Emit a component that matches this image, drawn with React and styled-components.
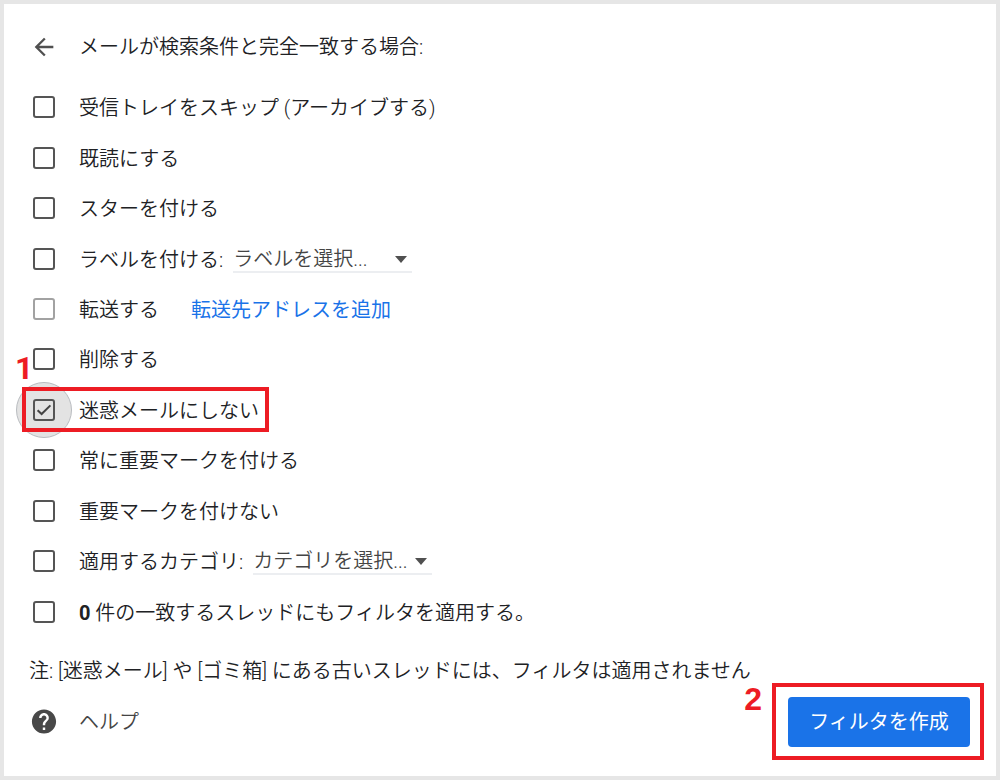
import React, { useState } from "react";
import styled, { createGlobalStyle } from "styled-components";

const GlobalStyle = createGlobalStyle`
  *{
    box-sizing: border-box;
  }

  body{
    margin: 0;
    background-color: #fff;
    color: #202124;
    font-family: Roboto, "Noto Sans CJK JP", sans-serif;
    font-size: 20px;
    font-weight: 350;
    line-height: 24px;
  }
`;

const Panel = styled.main`
  display: flex;
  flex-direction: column;
  min-height: 100vh;
  border: 4px solid #e6e6e6;
  padding: 23px 12px 16px 25px;
`;

const Header = styled.header`
  display: flex;
  align-items: center;
  gap: 20px;
  height: 40px;
  margin-bottom: 15px;
`;

const Title = styled.h1`
  margin: 0;
  font-size: 20px;
  font-weight: 350;
`;

const BackButton = styled.button`
  display: flex;
  align-items: center;
  justify-content: center;
  width: 30px;
  height: 30px;
  padding: 0;
  border: none;
  background-color: transparent;
  color: #505050;
  cursor: pointer;
`;

const Options = styled.form`
  flex: 1;
  display: grid;
  grid-auto-rows: 1fr;
`;

const Row = styled.div`
  position: relative;
  display: flex;
  align-items: center;
  min-height: 40px;
`;

const CheckCell = styled.span`
  position: relative;
  display: grid;
  place-items: center;
  width: 30px;
  height: 30px;
  margin-right: 20px;

  svg{
    position: absolute;
    pointer-events: none;
  }
`;

const Ripple = styled.span`
  position: absolute;
  width: 56px;
  height: 56px;
  border: 1px solid #b9bcc0;
  border-radius: 50%;
  background-color: #e3e3e3;
`;

const Checkbox = styled.input`
  appearance: none;
  position: relative;
  width: 22px;
  height: 22px;
  margin: 0;
  border: 2px solid ${({ disabled }) => (disabled ? "#a2a2a2" : "#555")};
  border-radius: 3px;
  cursor: pointer;
`;

const Label = styled.label`
  padding-top: 2px;
  cursor: pointer;

  strong{
    font-weight: 700;
  }
`;

const SelectWrap = styled.span`
  position: relative;
  display: flex;
  width: 179px;
  margin-left: 10px;

  svg{
    position: absolute;
    right: 5px;
    top: 11px;
    pointer-events: none;
  }
`;

const Select = styled.select`
  appearance: none;
  width: 100%;
  height: 28px;
  padding: 2px 0 0;
  border: none;
  border-bottom: 2px solid #eceef1;
  border-radius: 0;
  background-color: transparent;
  color: #444;
  font: inherit;
  cursor: pointer;
`;

const AddLink = styled.a`
  margin-left: 32px;
  padding-top: 2px;
  color: #1a73e8;
  font-weight: 400;
  text-decoration: none;
`;

const Highlight = styled.span`
  position: absolute;
  left: -7px;
  top: 50%;
  width: 247px;
  height: 45px;
  margin-top: -23px;
  border: 4px solid #ed1c24;
  pointer-events: none;
`;

const Step = styled.span`
  color: #ed1c24;
  font-family: ${({ $font }) => $font || '"Liberation Sans"'}, sans-serif;
  font-size: 32px;
  font-weight: 700;
  line-height: 32px;
`;

const RowStep = styled(Step)`
  position: absolute;
  left: -14px;
  bottom: 50%;
  margin-bottom: 26px;
`;

const Note = styled.p`
  margin: 0;
  padding-top: 22px;
`;

const Footer = styled.footer`
  display: flex;
  align-items: center;
  justify-content: space-between;
`;

const HelpLink = styled.a`
  display: flex;
  align-items: center;
  gap: 20px;
  color: #444;
  text-decoration: none;

  svg{
    width: 30px;
  }
`;

const Action = styled.div`
  display: flex;
  gap: 10px;
`;

const Callout = styled.div`
  padding: 10px 10px 9px 12px;
  border: 4px solid #ed1c24;
`;

const CreateButton = styled.button`
  height: 50px;
  min-width: 182px;
  padding: 0 20px;
  border: none;
  border-radius: 4px;
  background-color: #1a73e8;
  color: #fff;
  font: inherit;
  font-weight: 400;
  cursor: pointer;
`;

const options = [
  { id: "archive", label: "受信トレイをスキップ (アーカイブする)" },
  { id: "read", label: "既読にする" },
  { id: "star", label: "スターを付ける" },
  { id: "label", label: "ラベルを付ける:", select: "ラベルを選択..." },
  { id: "forward", label: "転送する", disabled: true, link: "転送先アドレスを追加" },
  { id: "delete", label: "削除する" },
  { id: "notSpam", label: "迷惑メールにしない", step: "1" },
  { id: "important", label: "常に重要マークを付ける" },
  { id: "notImportant", label: "重要マークを付けない" },
  { id: "category", label: "適用するカテゴリ:", select: "カテゴリを選択..." },
  { id: "existing", label: <><strong>0</strong> 件の一致するスレッドにもフィルタを適用する。</> },
];

const Option = ({ option, checked, onChange }) => {
  const { id, label, select, link, disabled, step } = option;

  return (
    <Row>
      <CheckCell>
        {checked && <Ripple />}
        <Checkbox type="checkbox" id={id} name={id} checked={checked} disabled={disabled} onChange={onChange} />
        {checked && (
          <svg width="22" height="22" viewBox="0 0 22 22" fill="none" stroke="#444" strokeWidth="2">
            <path d="M4.6 11.2 8.6 15 17.4 6.4" />
          </svg>
        )}
      </CheckCell>
      <Label htmlFor={id}>{label}</Label>
      {select && (
        <SelectWrap>
          <Select aria-label={select}>
            <option>{select}</option>
          </Select>
          <svg width="12" height="7" viewBox="0 0 12 7" fill="#505050">
            <path d="M0 0h12L6 7z" />
          </svg>
        </SelectWrap>
      )}
      {link && <AddLink href="#forwarding">{link}</AddLink>}
      {step && (
        <>
          <Highlight />
          <RowStep $font="Roboto">{step}</RowStep>
        </>
      )}
    </Row>
  );
};

const App = () => {
  const [checked, setChecked] = useState({ notSpam: true });

  const handleChange = (e) => {
    setChecked({ ...checked, [e.target.name]: e.target.checked });
  };

  return (
    <>
      <GlobalStyle />
      <Panel>
        <Header>
          <BackButton type="button" aria-label="戻る">
            <svg width="28" height="28" viewBox="0 0 24 24" fill="currentColor">
              <path d="M20 11H7.83l5.59-5.59L12 4l-8 8 8 8 1.41-1.41L7.83 13H20v-2z" />
            </svg>
          </BackButton>
          <Title>メールが検索条件と完全一致する場合:</Title>
        </Header>

        <Options id="filter">
          {options.map((option) => (
            <Option key={option.id} option={option} checked={!!checked[option.id]} onChange={handleChange} />
          ))}
        </Options>

        <Note>注: [迷惑メール] や [ゴミ箱] にある古いスレッドには、フィルタは適用されません</Note>

        <Footer>
          <HelpLink href="#help">
            <svg height="29" viewBox="0 0 24 24" fill="#484848">
              <path d="M12 2C6.48 2 2 6.48 2 12s4.48 10 10 10 10-4.48 10-10S17.52 2 12 2zm1 17h-2v-2h2v2zm2.07-7.75-.9.92C13.45 12.9 13 13.5 13 15h-2v-.5c0-1.1.45-2.1 1.17-2.83l1.24-1.26c.37-.36.59-.86.59-1.41 0-1.1-.9-2-2-2s-2 .9-2 2H8c0-2.21 1.79-4 4-4s4 1.79 4 4c0 .88-.36 1.68-.93 2.25z" />
            </svg>
            ヘルプ
          </HelpLink>
          <Action>
            <Step>2</Step>
            <Callout>
              <CreateButton type="submit" form="filter">フィルタを作成</CreateButton>
            </Callout>
          </Action>
        </Footer>
      </Panel>
    </>
  );
};

export default App;
